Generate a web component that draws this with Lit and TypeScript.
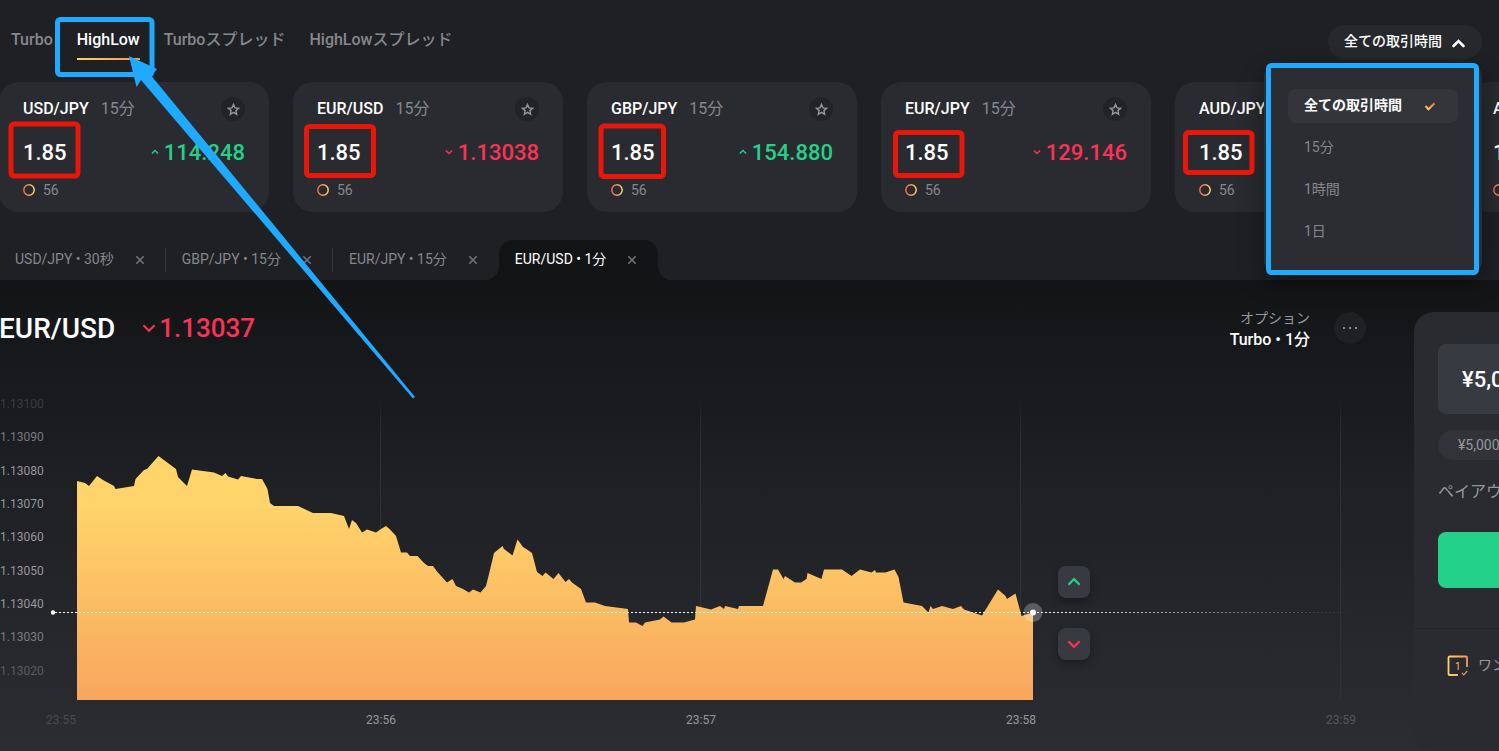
import { LitElement, html, svg, css } from "lit";
import { customElement, property, state } from "lit/decorators.js";
import { classMap } from "lit/directives/class-map.js";

type Direction = "up" | "down";

interface Instrument {
  pair: string;
  period: string;
  payout: string;
  price: string;
  direction: Direction;
  score: number;
}

const INSTRUMENTS: Instrument[] = [
  { pair: "USD/JPY", period: "15分", payout: "1.85", price: "114.248", direction: "up", score: 56 },
  { pair: "EUR/USD", period: "15分", payout: "1.85", price: "1.13038", direction: "down", score: 56 },
  { pair: "GBP/JPY", period: "15分", payout: "1.85", price: "154.880", direction: "up", score: 56 },
  { pair: "EUR/JPY", period: "15分", payout: "1.85", price: "129.146", direction: "down", score: 56 },
  { pair: "AUD/JPY", period: "15分", payout: "1.85", price: "82.134", direction: "up", score: 56 },
  { pair: "AUD/USD", period: "15分", payout: "1.85", price: "0.71892", direction: "up", score: 56 },
];

const MODES = ["Turbo", "HighLow", "Turboスプレッド", "HighLowスプレッド"];
const DURATIONS = ["全ての取引時間", "15分", "1時間", "1日"];
const OPEN_TABS = ["USD/JPY • 30秒", "GBP/JPY • 15分", "EUR/JPY • 15分", "EUR/USD • 1分"];

const chevron = (direction: Direction, size: number, stroke = 2) => html`
  <svg width=${size} height=${size} viewBox="0 0 16 16" fill="none" aria-hidden="true">
    <path
      d=${direction === "up" ? "M3 10.5 8 5.5l5 5" : "M3 5.5l5 5 5-5"}
      stroke="currentColor"
      stroke-width=${stroke}
    />
  </svg>
`;

const cross = html`
  <svg width="10" height="10" viewBox="0 0 10 10" aria-hidden="true">
    <path d="M1.300 1.300l7.400 7.400M8.700 1.300l-7.400 7.400" stroke="currentColor" stroke-width="1.600" />
  </svg>
`;

@customElement("instrument-card")
export class InstrumentCard extends LitElement {
  @property({ attribute: false }) item!: Instrument;

  static styles = css`
    :host {
      display: block;
      flex: none;
      box-sizing: border-box;
      width: 270px;
      height: 130px;
      padding: 14px 24px 0;
      border-radius: 20px;
      background: #2a2b30;
    }
    .row {
      display: flex;
      align-items: center;
    }
    .title {
      height: 26px;
      gap: 12px;
      font-size: 16px;
      line-height: 26px;
    }
    .pair {
      font-weight: 500;
      color: #fff;
    }
    .period {
      color: #86878c;
    }
    .star {
      display: grid;
      place-items: center;
      width: 24px;
      height: 24px;
      margin-left: auto;
      padding: 0;
      border: 0;
      border-radius: 50%;
      background: #222327;
      color: #96979c;
    }
    .quote {
      justify-content: space-between;
      height: 60px;
      font-size: 22px;
      font-weight: 500;
    }
    .payout {
      color: #fff;
    }
    .price {
      display: flex;
      align-items: center;
      gap: 4px;
    }
    .up {
      color: #24d18a;
    }
    .down {
      color: #fa3356;
    }
    .score {
      height: 16px;
      gap: 8px;
      font-size: 14px;
      line-height: 16px;
      color: #86878c;
    }
  `;

  render() {
    const { pair, period, payout, price, direction, score } = this.item;
    return html`
      <div class="row title">
        <span class="pair">${pair}</span>
        <span class="period">${period}</span>
        <button class="star" aria-label="${pair} をお気に入りに追加">
          <svg width="13" height="13" viewBox="0 0 14 14" fill="none" aria-hidden="true">
            <path
              d="M7 1.6l1.6 3.6 3.9.4-2.9 2.6.8 3.9L7 10.1l-3.4 2 .8-3.9-2.9-2.6 3.9-.4z"
              stroke="currentColor"
              stroke-width="1.5"
            />
          </svg>
        </button>
      </div>
      <div class="row quote">
        <span class="payout">${payout}</span>
        <span class="price ${direction}">${chevron(direction, 10, 2.2)}${price}</span>
      </div>
      <div class="row score">
        <svg width="12" height="12" viewBox="0 0 12 12" fill="none" aria-hidden="true">
          <defs>
            <linearGradient id="ring" x1="0" x2="1" y1="0" y2="0">
              <stop offset="0" stop-color="#f0684c" />
              <stop offset="1" stop-color="#ffd166" />
            </linearGradient>
          </defs>
          <circle cx="6" cy="6" r="5.2" stroke="url(#ring)" stroke-width="1.5" />
        </svg>
        <span>${score}</span>
      </div>
    `;
  }
}

/** Points of the rate curve, in pixels of the plot area. */
const CURVE: [number, number][] = [
  [77, 97], [85, 99], [89, 102], [97, 92], [103, 96], [114, 102], [115.5, 105], [134, 102],
  [135.5, 95], [144, 86], [147, 85], [158.5, 72], [176, 85], [178, 93], [187, 102], [192, 85.5],
  [214, 88.5], [222, 92], [225.5, 89], [228, 92.5], [238, 95.5], [241, 92], [257, 95], [262, 95],
  [267.5, 105], [270, 119], [274, 122], [298, 122], [313, 129], [331, 129], [344, 132], [349, 145],
  [352, 136], [356, 139], [362, 148.5], [367, 145.5], [376, 148.5], [381, 145], [386, 142],
  [390, 145.5], [396, 152], [401, 168.5], [407, 168.5], [410, 172], [417.5, 172], [424, 179],
  [428, 182], [433, 182], [437, 187.5], [447, 198.5], [452.5, 195], [456, 202], [463, 205],
  [469, 208.5], [473, 205.5], [480.5, 208.5], [486, 202], [490, 186], [494, 169], [502.5, 162],
  [504, 165], [512.5, 171.5], [517.5, 155.5], [523, 163], [527, 165.5], [532, 169], [537, 188],
  [542.5, 192], [545.5, 188.5], [553.5, 195], [558.5, 189], [565.5, 198], [569, 195], [572, 198.5],
  [581, 205], [586, 218.5], [595, 218.5], [605, 222], [628, 225], [629, 238.5], [636, 238.5],
  [642.5, 242], [645, 238.5], [650, 237.5], [660, 235.5], [663.5, 232.5], [671.5, 238.5],
  [684, 238.5], [695, 235.5], [696, 222], [711, 225.5], [720, 222], [724, 225], [725, 222],
  [738, 225], [739, 222], [763, 222], [773, 185.5], [778, 185.5], [783.5, 195], [785, 192],
  [795, 198.5], [801, 198.5], [806.5, 195], [807.5, 189], [821.5, 195], [824, 185.5],
  [842, 185.5], [851.5, 192], [860, 185.5], [871.5, 188.5], [875, 186], [876, 188.5],
  [885.5, 188.5], [894.5, 185.5], [898.5, 193], [903.5, 218.5], [922, 222], [928.5, 228.5],
  [930.5, 222], [933, 225], [942, 222], [953, 225], [961, 222], [964, 225.5], [982, 231.5],
  [998, 205.5], [1005.5, 212], [1007, 215], [1015.5, 209.5], [1021.5, 232], [1033, 228.5],
];
const FLOOR = 316;
const RATES = [
  { label: "1.13100", opacity: 0.25 },
  { label: "1.13090", opacity: 0.75 },
  { label: "1.13080", opacity: 1 },
  { label: "1.13070", opacity: 1 },
  { label: "1.13060", opacity: 1 },
  { label: "1.13050", opacity: 1 },
  { label: "1.13040", opacity: 1 },
  { label: "1.13030", opacity: 0.75 },
  { label: "1.13020", opacity: 0.45 },
];
const TIMES = [
  { label: "23:55", x: 61, opacity: 0.28 },
  { label: "23:56", x: 381, opacity: 1 },
  { label: "23:57", x: 701, opacity: 1 },
  { label: "23:58", x: 1021, opacity: 1 },
  { label: "23:59", x: 1341, opacity: 0.4 },
];

@customElement("rate-chart")
export class RateChart extends LitElement {
  static styles = css`
    :host {
      display: block;
      position: relative;
    }
    .plot {
      display: block;
      width: 100%;
      height: 367px;
    }
    .label {
      font-size: 12px;
      fill: #96979c;
    }
    .trade {
      position: absolute;
      left: 1058px;
      display: grid;
      place-items: center;
      width: 32px;
      height: 32px;
      padding: 0;
      border: 0;
      border-radius: 8px;
      background: #383a42;
      box-shadow: 0 4px 8px rgba(0, 0, 0, 0.3);
    }
    .high {
      top: 182px;
      color: #24d18a;
    }
    .low {
      top: 244px;
      color: #fa3356;
    }
  `;

  render() {
    const first = CURVE[0];
    const last = CURVE[CURVE.length - 1];
    const area =
      `M${first[0]} ${FLOOR}` + CURVE.map(([x, y]) => `L${x} ${y}`).join("") + `L${last[0]} ${FLOOR}Z`;
    return html`
      <svg class="plot" role="img" aria-label="EUR/USD チャート">
        <defs>
          <linearGradient id="area" gradientUnits="userSpaceOnUse" x1="0" y1="72" x2="0" y2=${FLOOR}>
            <stop offset="0" stop-color="#ffd56a" />
            <stop offset="0.2" stop-color="#ffd46a" />
            <stop offset="1" stop-color="#f8a65d" />
          </linearGradient>
          <linearGradient id="rule" gradientUnits="userSpaceOnUse" x1="0" y1="10" x2="0" y2="60">
            <stop offset="0" stop-color="#303136" stop-opacity="0" />
            <stop offset="1" stop-color="#303136" />
          </linearGradient>
          <linearGradient id="fade" gradientUnits="userSpaceOnUse" x1="1033" y1="0" x2="1355" y2="0">
            <stop offset="0" stop-color="#fff" />
            <stop offset="1" stop-color="#fff" stop-opacity="0" />
          </linearGradient>
        </defs>
        ${TIMES.slice(1).map(
          (t) => svg`<rect x=${t.x - 1} y="10" width="1" height=${FLOOR - 10} fill="url(#rule)" />`
        )}
        <path d=${area} fill="url(#area)" />
        <path d="M55 228.500H1033" stroke="#fff" stroke-dasharray="2 2" />
        <path d="M1033 228.500L1355 228.501" stroke="url(#fade)" stroke-dasharray="2 2" />
        <circle cx="53" cy="228.500" r="2.200" fill="#fff" />
        <circle cx="1033" cy="228.500" r="9.500" fill="#fff" fill-opacity="0.25" />
        <circle cx="1033" cy="228.500" r="3" fill="#fff" />
        ${RATES.map(
          (r, i) => svg`<text class="label" x="0" y=${Math.round(24 + (i * 100) / 3)} opacity=${r.opacity}>${r.label}</text>`
        )}
        ${TIMES.map(
          (t) => svg`<text class="label" x=${t.x} y="340" text-anchor="middle" opacity=${t.opacity}>${t.label}</text>`
        )}
      </svg>
      <button class="trade high" aria-label="High">${chevron("up", 18)}</button>
      <button class="trade low" aria-label="Low">${chevron("down", 18)}</button>
    `;
  }
}

@customElement("order-panel")
export class OrderPanel extends LitElement {
  static styles = css`
    :host {
      display: block;
      box-sizing: border-box;
      width: 320px;
      border-radius: 20px;
      background: #2a2b30;
      white-space: nowrap;
    }
    .form {
      padding: 32px 24px 40px;
      border-bottom: 1px solid #222327;
    }
    .amount {
      display: block;
      box-sizing: border-box;
      width: 100%;
      height: 70px;
      padding: 0 24px;
      border: 0;
      border-radius: 8px;
      background: #383a42;
      color: #fff;
      font: 500 22px Roboto, "Noto Sans CJK JP", sans-serif;
    }
    .preset {
      display: block;
      height: 30px;
      margin: 16px 0;
      padding: 0 20px;
      border: 0;
      border-radius: 15px;
      background: #313338;
      color: #96979c;
      font: 400 14px Roboto, "Noto Sans CJK JP", sans-serif;
    }
    .payout {
      height: 32px;
      margin-bottom: 24px;
      font-size: 16px;
      line-height: 32px;
      color: #96979c;
    }
    .buy {
      display: block;
      width: 100%;
      height: 56px;
      border: 0;
      border-radius: 8px;
      background: #24d18a;
      color: #fff;
    }
    .oneclick {
      display: flex;
      align-items: center;
      gap: 10px;
      width: 100%;
      height: 72px;
      padding: 0 33px;
      border: 0;
      background: none;
      color: #96979c;
      font: 400 14px/20px Roboto, "Noto Sans CJK JP", sans-serif;
    }
    .digit {
      font-size: 10px;
      fill: #ffb861;
    }
  `;

  render() {
    return html`
      <div class="form">
        <input class="amount" aria-label="投資額" value="¥5,000" />
        <button class="preset">¥5,000</button>
        <div class="payout">ペイアウト</div>
        <button class="buy" aria-label="購入"></button>
      </div>
      <button class="oneclick">
        <svg width="21" height="21" viewBox="0 0 21 21" fill="none" aria-hidden="true">
          <defs>
            <linearGradient id="frame" x1="0" x2="1" y1="0" y2="0">
              <stop offset="0" stop-color="#ffd166" />
              <stop offset="1" stop-color="#f7955c" />
            </linearGradient>
          </defs>
          <path
            d="M11 20H2.500A1 1 0 0 1 1.500 19V2.500A1 1 0 0 1 2.500 1.500H19A1 1 0 0 1 20 2.500V12"
            stroke="url(#frame)"
            stroke-width="1.800"
          />
          <path d="M15 18l1.800 1.800 3.400-3.800" stroke="#e09a58" stroke-width="1.200" />
          <text class="digit" x="10.800" y="15" text-anchor="middle">1</text>
        </svg>
        ワンクリック
      </button>
    `;
  }
}

/** Marker boxes and the arrow that point at parts of the screen. */
const MARKS = [
  { x: 11, y: 124, w: 67, h: 52, color: "#e8170a" },
  { x: 306.5, y: 126.5, w: 67, h: 49, color: "#e8170a" },
  { x: 601, y: 126, w: 62.5, h: 50.5, color: "#e8170a" },
  { x: 895.5, y: 132.5, w: 66.5, h: 43, color: "#e8170a" },
  { x: 1185.5, y: 132.5, w: 66.5, h: 40, color: "#e8170a" },
  { x: 57.5, y: 19.5, w: 94.5, h: 55, color: "#1faaff" },
  { x: 1268.5, y: 65.5, w: 208, h: 207, color: "#1faaff" },
];

@customElement("app-root")
export class AppRoot extends LitElement {
  @state() private mode = "HighLow";
  @state() private duration = DURATIONS[0];
  @state() private menuOpen = true;
  @state() private tab = OPEN_TABS[3];

  static styles = css`
    :host {
      display: block;
      position: relative;
      min-height: 100vh;
      overflow: hidden;
      background: #1f2024;
      color: #96979c;
      font-family: Roboto, "Noto Sans CJK JP", sans-serif;
    }
    button {
      font-family: inherit;
      cursor: pointer;
    }
    .page {
      margin-left: -1px;
    }
    .top {
      display: flex;
      align-items: flex-start;
      justify-content: space-between;
      box-sizing: border-box;
      height: 82px;
      padding: 17px 17px 0 12px;
    }
    .modes {
      display: flex;
      gap: 24px;
    }
    .mode {
      height: 43px;
      padding: 4px 0 0;
      border: 0;
      border-bottom: 2px solid transparent;
      background: none;
      color: #86878c;
      font-size: 16px;
      font-weight: 500;
      line-height: 24px;
      white-space: nowrap;
    }
    .mode.on {
      border-image: linear-gradient(90deg, #ffd166, #f7955c) 1;
      color: #fff;
    }
    .picker {
      position: relative;
      margin-top: 8px;
    }
    .toggle {
      display: flex;
      align-items: center;
      gap: 9px;
      height: 34px;
      padding: 0 16px 2px;
      border: 0;
      border-radius: 17px;
      background: #27282c;
      color: #fff;
      font-size: 14px;
      font-weight: 500;
      line-height: 20px;
    }
    .menu {
      position: absolute;
      top: 40px;
      right: 0;
      z-index: 2;
      display: grid;
      gap: 8px;
      box-sizing: border-box;
      width: 218px;
      margin: 0;
      padding: 24px;
      border-radius: 12px;
      background: #2c2d32;
      box-shadow: 0 8px 24px rgba(0, 0, 0, 0.45);
      list-style: none;
    }
    .choice {
      display: flex;
      align-items: center;
      justify-content: space-between;
      width: 100%;
      height: 34px;
      padding: 0 22px 2px 16px;
      border: 0;
      border-radius: 8px;
      background: none;
      color: #86878c;
      font-size: 14px;
      line-height: 20px;
    }
    .choice.on {
      background: #34353a;
      color: #fff;
      font-weight: 700;
    }
    .cards {
      display: flex;
      gap: 24px;
      overflow: hidden;
    }
    .tabs {
      display: flex;
      margin-top: 28px;
    }
    .tab {
      position: relative;
      display: flex;
      align-items: center;
      gap: 18px;
      height: 40px;
      padding: 0 18px 0 16px;
    }
    .tab + .tab:not(.on)::before {
      content: "";
      position: absolute;
      top: 8px;
      left: -1px;
      width: 1px;
      height: 24px;
      background: #34353a;
    }
    .tab.on {
      border-radius: 14px 14px 0 0;
      background: #131416;
    }
    .tab.on::before,
    .tab.on::after {
      content: "";
      position: absolute;
      bottom: 0;
      width: 14px;
      height: 14px;
    }
    .tab.on::before {
      right: 100%;
      background: radial-gradient(circle at 0 0, transparent 14px, #131416 14px);
    }
    .tab.on::after {
      left: 100%;
      background: radial-gradient(circle at 100% 0, transparent 14px, #131416 14px);
    }
    .name,
    .close {
      padding: 0;
      border: 0;
      background: none;
      color: #86878c;
      font-size: 14px;
      line-height: 16px;
      white-space: nowrap;
    }
    .name {
      padding-bottom: 2px;
    }
    .tab.on .name {
      color: #fff;
    }
    .close {
      display: grid;
      place-items: center;
      width: 16px;
      height: 16px;
      color: #717277;
    }
    .main {
      display: grid;
      grid-template-columns: minmax(0, 1fr) 85px;
      min-height: calc(100vh - 280px);
      background: linear-gradient(#131416, #1e1f23 40%, #2c2d32);
    }
    .head {
      display: flex;
      align-items: center;
      box-sizing: border-box;
      height: 104px;
      padding: 0 48px 8px 0;
    }
    .symbol {
      margin: 0;
      color: #fff;
      font-size: 28px;
      font-weight: 500;
    }
    .rate {
      display: flex;
      align-items: center;
      gap: 1px;
      margin-left: 25px;
      color: #fa3356;
      font-size: 26px;
      font-weight: 500;
    }
    .option {
      display: grid;
      margin: 2px 0 0 auto;
      font-size: 14px;
      line-height: 22px;
      text-align: right;
    }
    .option strong {
      color: #fff;
      font-size: 16px;
      font-weight: 500;
    }
    .more {
      display: grid;
      place-items: center;
      width: 32px;
      height: 32px;
      margin-left: 24px;
      padding: 0;
      border: 0;
      border-radius: 50%;
      background: #1f2024;
      color: #86878c;
    }
    .chart {
      margin-left: 1px;
    }
    .panel {
      margin-top: 32px;
    }
    .marks {
      position: absolute;
      inset: 0;
      z-index: 3;
      width: 100%;
      height: 100%;
      pointer-events: none;
    }
  `;

  render() {
    return html`
      <div class="page">
        <header class="top">
          <nav class="modes">
            ${MODES.map(
              (m) => html`<button
                class=${classMap({ mode: true, on: m === this.mode })}
                @click=${() => (this.mode = m)}
              >${m}</button>`
            )}
          </nav>
          <div class="picker">
            <button
              class="toggle"
              aria-haspopup="true"
              aria-expanded=${this.menuOpen}
              @click=${() => (this.menuOpen = !this.menuOpen)}
            >
              ${this.duration}
              <svg width="15" height="14" viewBox="0 0 15 14" fill="none" aria-hidden="true">
                <path d="M2.500 12l5-5 5 5" stroke="currentColor" stroke-width="2.600" stroke-linecap="round" />
              </svg>
            </button>
            ${this.menuOpen
              ? html`<ul class="menu">
                  ${DURATIONS.map(
                    (d) => html`<li>
                      <button
                        class=${classMap({ choice: true, on: d === this.duration })}
                        @click=${() => (this.duration = d)}
                      >
                        ${d}
                        ${d === this.duration
                          ? html`<svg width="12" height="12" viewBox="0 0 12 12" fill="none" aria-hidden="true">
                              <defs>
                                <linearGradient id="tick" x1="0" x2="1" y1="1" y2="0">
                                  <stop offset="0" stop-color="#ffd166" />
                                  <stop offset="1" stop-color="#f0684c" />
                                </linearGradient>
                              </defs>
                              <path d="M1.500 7l3 3.200 6-6" stroke="url(#tick)" stroke-width="2.200" />
                            </svg>`
                          : ""}
                      </button>
                    </li>`
                  )}
                </ul>`
              : ""}
          </div>
        </header>

        <section class="cards">
          ${INSTRUMENTS.map((item) => html`<instrument-card .item=${item}></instrument-card>`)}
        </section>

        <nav class="tabs">
          ${OPEN_TABS.map(
            (t) => html`<div class=${classMap({ tab: true, on: t === this.tab })}>
              <button class="name" @click=${() => (this.tab = t)}>${t}</button>
              <button class="close" aria-label="${t} を閉じる">${cross}</button>
            </div>`
          )}
        </nav>

        <main class="main">
          <section>
            <div class="head">
              <h1 class="symbol">EUR/USD</h1>
              <div class="rate">${chevron("down", 18, 1.8)}1.13037</div>
              <div class="option"><span>オプション</span><strong>Turbo • 1分</strong></div>
              <button class="more" aria-label="メニュー">
                <svg width="14" height="2" viewBox="0 0 14 2" fill="currentColor" aria-hidden="true">
                  <path d="M0 0h2v2H0zM6 0h2v2H6zM12 0h2v2h-2z" />
                </svg>
              </button>
            </div>
            <rate-chart class="chart"></rate-chart>
          </section>
          <order-panel class="panel"></order-panel>
        </main>
      </div>

      <svg class="marks" aria-hidden="true">
        ${MARKS.map(
          (m) => svg`<rect x=${m.x} y=${m.y} width=${m.w} height=${m.h} rx="3" fill="none" stroke=${m.color} stroke-width="5" />`
        )}
        <path d="M129 56L157 69 151.500 76 415 397 413 398.500 141 80 136.500 87Z" fill="#1faaff" />
      </svg>
    `;
  }
}
